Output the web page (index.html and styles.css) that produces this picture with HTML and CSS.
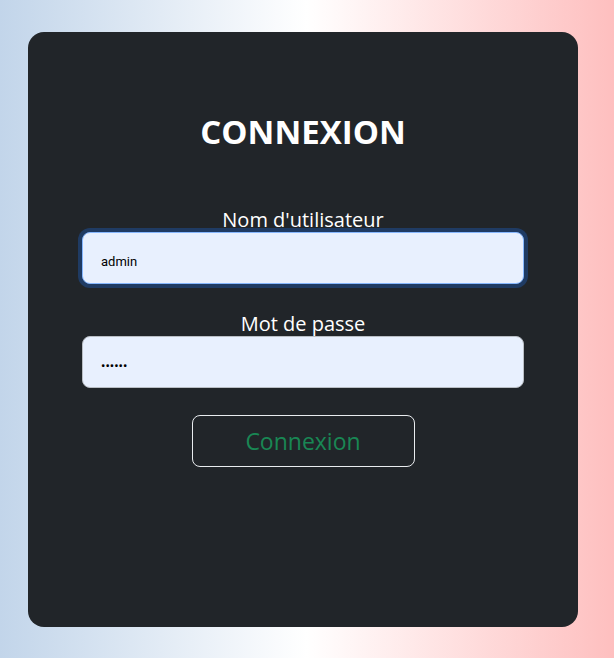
FILE: index.html
```html
<!DOCTYPE html>
<html lang="fr">
<head>
<meta charset="utf-8">
<title>Connexion</title>
<link rel="stylesheet" href="styles.css">
</head>
<body>
<main class="card">
  <h1 class="title">CONNEXION</h1>
  <form class="form">
    <label class="label" for="user">Nom d'utilisateur</label>
    <input class="field field-focus" id="user" type="text" value="admin">
    <label class="label label-second" for="pass">Mot de passe</label>
    <input class="field" id="pass" type="password" value="secret">
    <button class="btn" type="button">Connexion</button>
  </form>
</main>
</body>
</html>
```
FILE: styles.css
```css
html, body {
  margin: 0;
  height: 100%;
}
body {
  background: linear-gradient(to right, #c2d5ea 0%, #ffffff 50%, #febfbf 100%);
  padding: 32px 36px 31px 28px;
  box-sizing: border-box;
  font-family: "Open Sans", "DejaVu Sans", sans-serif;
}
.card {
  box-sizing: border-box;
  width: 550px;
  height: 595px;
  background: #212529;
  border-radius: 16px;
  padding: 0 54px;
  display: flex;
  flex-direction: column;
}
.title {
  margin: 77px 0 0;
  color: #ffffff;
  text-align: center;
  font-size: 33px;
  line-height: 46px;
  font-weight: 700;
}
.form {
  display: flex;
  flex-direction: column;
  align-items: center;
  margin-top: 53px;
}
.label {
  color: #ffffff;
  font-size: 20px;
  line-height: 24px;
  text-align: center;
}
.label-second {
  margin-top: 28px;
}
.field {
  box-sizing: border-box;
  width: 442px;
  height: 52px;
  background: #e8f0fe;
  border: 1px solid #b9bec4;
  border-radius: 8px;
  padding: 6px 18px 0;
  font-family: Roboto, "Liberation Sans", sans-serif;
  font-size: 13px;
  color: #000000;
  outline: none;
}
.field-focus {
  border-color: #86b7fe;
  box-shadow: 0 0 0 4px #1f3b63;
}
.btn {
  box-sizing: border-box;
  margin-top: 27px;
  width: 223px;
  height: 52px;
  background: transparent;
  border: 1px solid #e9ecef;
  border-radius: 8px;
  color: #198754;
  font-family: "Open Sans", "DejaVu Sans", sans-serif;
  font-size: 23px;
}
```
